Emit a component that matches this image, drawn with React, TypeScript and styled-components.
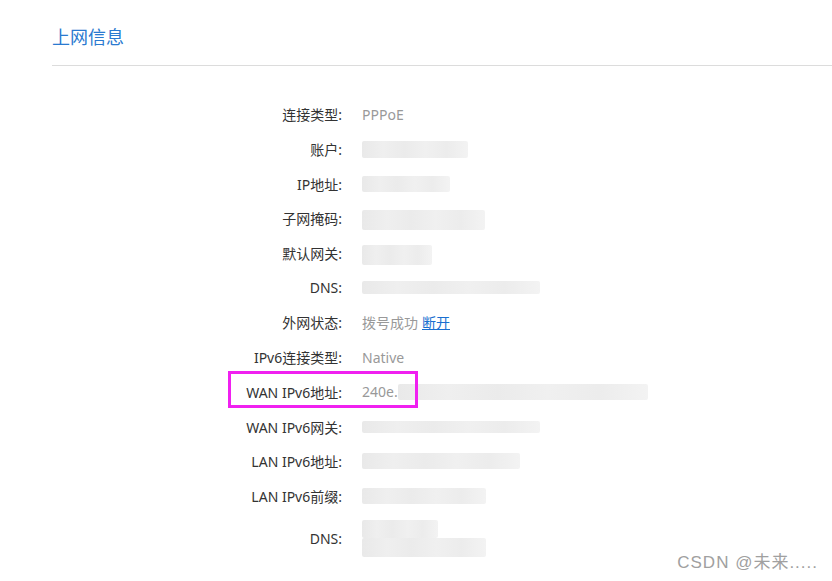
import React, { FC } from "react";
import styled, { createGlobalStyle } from "styled-components";

const GlobalStyle = createGlobalStyle`
  html, body {
    margin: 0;
    padding: 0;
    background: #fff;
  }
  body {
    font-family: "Noto Sans", "Noto Sans CJK SC", sans-serif;
    overflow: hidden;
  }
`;

const Page = styled.div`
  position: relative;
  width: 832px;
  height: 581px;
  padding-left: 52px;
  box-sizing: border-box;
`;

const Header = styled.header`
  height: 66px;
  box-sizing: border-box;
  padding-top: 24px;
  border-bottom: 1px solid #dcdcdc;
`;

const Title = styled.h2`
  margin: 0;
  font-size: 18px;
  line-height: 24px;
  font-weight: 400;
  color: #2a7ad0;
  font-family: "Noto Sans CJK SC", sans-serif;
`;

const InfoList = styled.div`
  display: grid;
  grid-template-columns: 290px 1fr;
  column-gap: 20px;
  margin-top: 31px;
`;

const Label = styled.div<{ $tall?: boolean }>`
  height: ${(p) => (p.$tall ? "51px" : "34.7px")};
  display: flex;
  align-items: center;
  justify-content: flex-end;
  font-size: 14px;
  color: #333;
  white-space: nowrap;
`;

const Value = styled.div<{ $tall?: boolean }>`
  height: ${(p) => (p.$tall ? "51px" : "34.7px")};
  display: flex;
  align-items: center;
  font-size: 14px;
  color: #999;
  white-space: nowrap;
`;

const Link = styled.a`
  color: #1a6fd0;
  text-decoration: underline;
  margin-left: 4px;
  cursor: pointer;
`;

const Redact = styled.div<{ $w: number; $h: number; $dy?: number }>`
  width: ${(p) => p.$w}px;
  height: ${(p) => p.$h}px;
  margin-top: ${(p) => p.$dy ?? 0}px;
  background: linear-gradient(
    90deg,
    #e9e9e9 0%,
    #efefef 20%,
    #ebebeb 40%,
    #f0f0f0 60%,
    #ececec 80%,
    #f3f3f3 100%
  );
  filter: blur(0.6px);
  border-radius: 2px;
`;

const StackedRedact = styled.div`
  display: flex;
  flex-direction: column;
`;

const HighlightBox = styled.div`
  position: absolute;
  left: 228px;
  top: 371px;
  width: 190px;
  height: 37px;
  box-sizing: border-box;
  border: 3px solid #f020f0;
  pointer-events: none;
`;

const Watermark = styled.div`
  position: absolute;
  right: 14px;
  bottom: 8px;
  font-size: 17px;
  letter-spacing: 1px;
  color: #a0a0a0;
  font-family: "Liberation Sans", "Noto Sans CJK SC", sans-serif;
`;

type Row = { label: string; value: React.ReactNode; tall?: boolean };

const rows: Row[] = [
  { label: "连接类型:", value: "PPPoE" },
  { label: "账户:", value: <Redact $w={106} $h={17} /> },
  { label: "IP地址:", value: <Redact $w={88} $h={16} /> },
  { label: "子网掩码:", value: <Redact $w={123} $h={20} $dy={4} /> },
  { label: "默认网关:", value: <Redact $w={70} $h={20} $dy={4} /> },
  { label: "DNS:", value: <Redact $w={178} $h={13} /> },
  {
    label: "外网状态:",
    value: (
      <>
        拨号成功<Link>断开</Link>
      </>
    ),
  },
  { label: "IPv6连接类型:", value: "Native" },
  {
    label: "WAN IPv6地址:",
    value: (
      <>
        240e.<Redact $w={250} $h={16} />
      </>
    ),
  },
  { label: "WAN IPv6网关:", value: <Redact $w={178} $h={12} /> },
  { label: "LAN IPv6地址:", value: <Redact $w={158} $h={16} /> },
  { label: "LAN IPv6前缀:", value: <Redact $w={124} $h={16} /> },
  {
    label: "DNS:",
    tall: true,
    value: (
      <StackedRedact>
        <Redact $w={76} $h={18} />
        <Redact $w={124} $h={19} />
      </StackedRedact>
    ),
  },
];

const App: FC = () => (
  <>
    <GlobalStyle />
    <Page>
      <Header>
        <Title>上网信息</Title>
      </Header>
      <InfoList>
        {rows.map((row, i) => (
          <React.Fragment key={i}>
            <Label $tall={row.tall}>{row.label}</Label>
            <Value $tall={row.tall}>{row.value}</Value>
          </React.Fragment>
        ))}
      </InfoList>
      <HighlightBox />
      <Watermark>CSDN @未来.....</Watermark>
    </Page>
  </>
);

export default App;
